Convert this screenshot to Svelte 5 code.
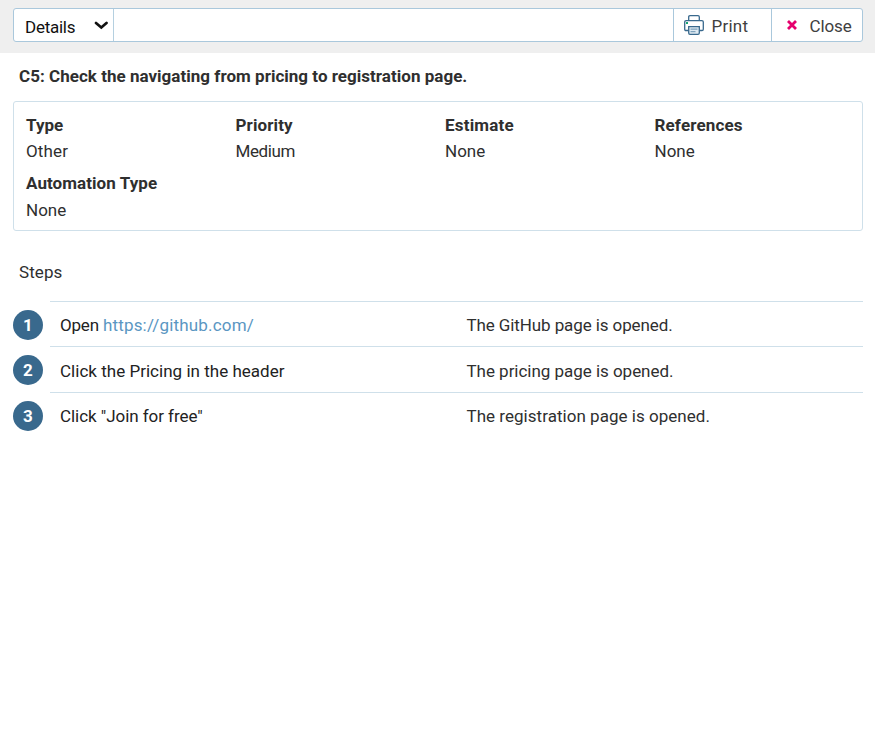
<script>
  const fields = [
    { name: 'Type', value: 'Other', valueTrack: 0.15 },
    { name: 'Priority', value: 'Medium', nameTrack: 0.12, valueTrack: -0.38 },
    { name: 'Estimate', value: 'None', nameTrack: 0.2 },
    { name: 'References', value: 'None', nameTrack: 0.14 },
    { name: 'Automation Type', value: 'None', nameTrack: 0.07 }
  ];
  const steps = [
    { action: 'Open ', link: 'https://github.com/', result: 'The GitHub page is opened.', actionTrack: -0.2, resultTrack: -0.1 },
    { action: 'Click the Pricing in the header', result: 'The pricing page is opened.', actionTrack: 0.02, resultTrack: -0.03 },
    { action: 'Click "Join for free"', result: 'The registration page is opened.', actionTrack: -0.05, resultTrack: 0.03 }
  ];
</script>

<header class="toolbar">
  <div class="bar">
    <button class="select">
      <span>Details</span>
      <svg width="14" height="9" viewBox="0 0 14 9"><path d="M2 2 L7.3 6.5 L12.5 2" fill="none" stroke="#111" stroke-width="2.7" stroke-linecap="round" stroke-linejoin="miter" /></svg>
    </button>
    <div class="space"></div>
    <button class="print">
      <svg width="20" height="20" viewBox="0 0 20 20" fill="none" stroke="#39698d" stroke-width="1.3">
        <path d="M4.7 5.5V2q0-1.3 1.3-1.3h8q1.3 0 1.3 1.3v3.5M4.5 15.5H2q-1.3 0-1.3-1.3V7q0-1.4 1.4-1.4h15.8q1.4 0 1.4 1.4v7.2q0 1.3-1.3 1.3h-2.5" />
        <path d="M4.7 11.6h10.6v6.4q0 1.3-1.3 1.3H6q-1.3 0-1.3-1.3z" fill="#dfeaf2" />
        <path d="M6.5 14.2h7M6.5 16.7h5" stroke="#7fa3bd" />
        <path d="M2 8h2" stroke="#17a673" stroke-width="1.8" />
      </svg>
      <span>Print</span>
    </button>
    <button class="close">
      <svg width="10" height="10" viewBox="0 0 10 10"><path d="M1 1L9 9M9 1L1 9" stroke="#e5006d" stroke-width="2.8" /></svg>
      <span>Close</span>
    </button>
  </div>
</header>
<main>
  <h1>C5: Check the navigating from pricing to registration page.</h1>
  <section class="fields">
    {#each fields as f}
      <div class="field">
        <div class="name" style:letter-spacing="{f.nameTrack ?? 0}px">{f.name}</div>
        <div style:letter-spacing="{f.valueTrack ?? 0}px">{f.value}</div>
      </div>
    {/each}
  </section>
  <h2>Steps</h2>
  {#each steps as step, i}
    <div class="step">
      <span class="num">{i + 1}</span>
      <div class="line">
        <div class="action" style:letter-spacing="{step.actionTrack}px">{step.action}{#if step.link}<a href="#top">{step.link}</a>{/if}</div>
        <div style:letter-spacing="{step.resultTrack}px">{step.result}</div>
      </div>
    </div>
  {/each}
</main>

<style>
  :global(body) { margin: 0; background: #fff; font: 17px/26px Roboto, sans-serif; color: #2f2f2f; }
  * { box-sizing: border-box; }
  .toolbar { background: #efefef; height: 53px; padding: 8px 12px 0 13px; }
  .bar { display: flex; height: 34px; background: #fff; border: 1px solid #aac8dc; border-radius: 3px; }
  button { font: inherit; color: #404040; background: none; border: 0; padding: 0; display: flex; align-items: center; }
  button span { padding-top: 2px; }
  .select { width: 100px; padding: 0 5px 0 11px; justify-content: space-between; border-right: 1px solid #b5d0e0; color: #111; letter-spacing: -0.25px; }
  .select span { padding-top: 4px; }
  .space { flex: 1; }
  .print { width: 98px; border-left: 1px solid #aac8dc; padding-left: 10px; gap: 7.5px; letter-spacing: 0.25px; }
  .close { width: 91px; border-left: 1px solid #aac8dc; padding-left: 15px; gap: 12.5px; letter-spacing: -0.1px; }
  main { padding: 0 12px 0 13px; }
  h1 { font: inherit; font-weight: 700; margin: 10px 0 12px 6px; letter-spacing: 0.025px; }
  .fields { height: 130px; border: 1px solid #cfe0ea; border-radius: 3px; display: grid; grid-template-columns: repeat(4, 209.5px); padding: 10px 0 0 12px; align-content: start; row-gap: 6px; }
  .name { font-weight: 700; }
  .field:nth-child(n + 5) .name { padding-bottom: 1px; }
  h2 { font: inherit; margin: 28px 0 16px 6px; letter-spacing: 0.1px; }
  .step { display: flex; align-items: flex-start; gap: 7px; height: 45.4px; }
  .num { width: 30px; height: 30px; margin-top: 9px; border-radius: 50%; background: #39698d; color: #fff; text-align: center; line-height: 30px; font-weight: 700; }
  .line { flex: 1; height: 100%; display: grid; grid-template-columns: 406.5px 1fr; align-items: start; padding: 10.2px 0 0 10px; border-top: 1px solid #cfe0ea; }
  .action { white-space: pre; color: #222; }
  a { color: #5a96c2; text-decoration: none; letter-spacing: 0.18px; }
</style>
